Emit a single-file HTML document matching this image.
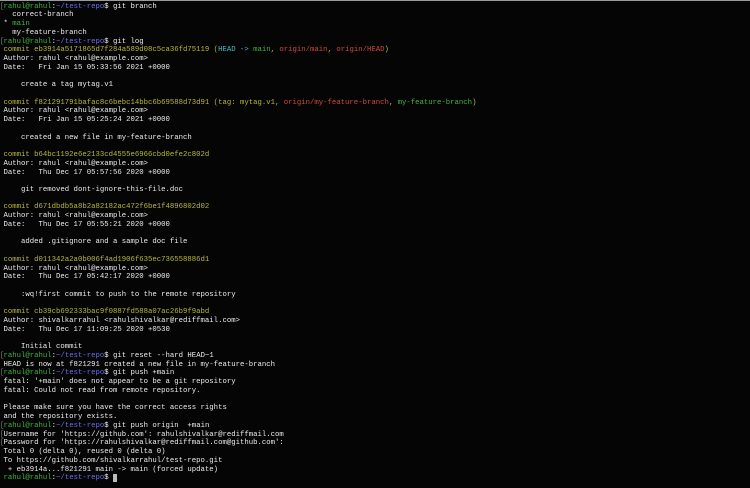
<!DOCTYPE html>
<html><head><meta charset="utf-8"><style>
html,body{margin:0;padding:0;background:#050505;width:750px;height:488px;overflow:hidden}
.top{position:absolute;left:0;top:0;width:750px;height:1px;background:#9a9a9a}
pre{position:absolute;left:3.5px;top:2.6px;margin:0;font-family:"Liberation Mono",monospace;font-size:7.3px;line-height:8.74px;color:#ececec;white-space:pre}
.g{color:#3fb33f}.b{color:#6c6cf2}.y{color:#b8b838}.c{color:#4fb8c8}.r{color:#d0483e}.gr{color:#41b541}
.k{position:relative}.k:before{content:"[";position:absolute;left:-3.6px;color:#7a7a7a}
.cur{background:#bbb;color:#bbb}
</style></head><body><div class="top"></div><pre><span class="k"></span><span class="g">rahul@rahul</span>:<span class="b">~/test-repo</span>$ git branch
  correct-branch
* <span class="gr">main</span>
  my-feature-branch
<span class="k"></span><span class="g">rahul@rahul</span>:<span class="b">~/test-repo</span>$ git log
<span class="y">commit eb3914a5171865d7f284a589d08c5ca36fd75119 (</span><span class="c">HEAD -&gt; </span><span class="gr">main</span><span class="y">, </span><span class="r">origin/main</span><span class="y">, </span><span class="r">origin/HEAD</span><span class="y">)</span>
Author: rahul &lt;rahul@example.com&gt;
Date:   Fri Jan 15 05:33:56 2021 +0000

    create a tag mytag.v1

<span class="y">commit f821291791bafac8c6bebc14bbc6b69588d73d91 (tag: mytag.v1, </span><span class="r">origin/my-feature-branch</span><span class="y">, </span><span class="gr">my-feature-branch</span><span class="y">)</span>
Author: rahul &lt;rahul@example.com&gt;
Date:   Fri Jan 15 05:25:24 2021 +0000

    created a new file in my-feature-branch

<span class="y">commit b64bc1192e6e2133cd4555e6966cbd0efe2c802d</span>
Author: rahul &lt;rahul@example.com&gt;
Date:   Thu Dec 17 05:57:56 2020 +0000

    git removed dont-ignore-this-file.doc

<span class="y">commit d671dbdb5a8b2a82182ac472f6be1f4896802d02</span>
Author: rahul &lt;rahul@example.com&gt;
Date:   Thu Dec 17 05:55:21 2020 +0000

    added .gitignore and a sample doc file

<span class="y">commit d011342a2a0b006f4ad1906f635ec736558886d1</span>
Author: rahul &lt;rahul@example.com&gt;
Date:   Thu Dec 17 05:42:17 2020 +0000

    :wq!first commit to push to the remote repository

<span class="y">commit cb39cb692333bac9f0887fd588a07ac26b9f9abd</span>
Author: shivalkarrahul &lt;rahulshivalkar@rediffmail.com&gt;
Date:   Thu Dec 17 11:09:25 2020 +0530

    Initial commit
<span class="k"></span><span class="g">rahul@rahul</span>:<span class="b">~/test-repo</span>$ git reset --hard HEAD~1
HEAD is now at f821291 created a new file in my-feature-branch
<span class="k"></span><span class="g">rahul@rahul</span>:<span class="b">~/test-repo</span>$ git push +main
fatal: '+main' does not appear to be a git repository
fatal: Could not read from remote repository.

Please make sure you have the correct access rights
and the repository exists.
<span class="k"></span><span class="g">rahul@rahul</span>:<span class="b">~/test-repo</span>$ git push origin  +main
<span class="k"></span>Username for 'https://github.com': rahulshivalkar@rediffmail.com
<span class="k"></span>Password for 'https://rahulshivalkar@rediffmail.com@github.com':
Total 0 (delta 0), reused 0 (delta 0)
To https://github.com/shivalkarrahul/test-repo.git
 + eb3914a...f821291 main -&gt; main (forced update)
<span class="g">rahul@rahul</span>:<span class="b">~/test-repo</span>$ <span class="cur">_</span></pre></body></html>
